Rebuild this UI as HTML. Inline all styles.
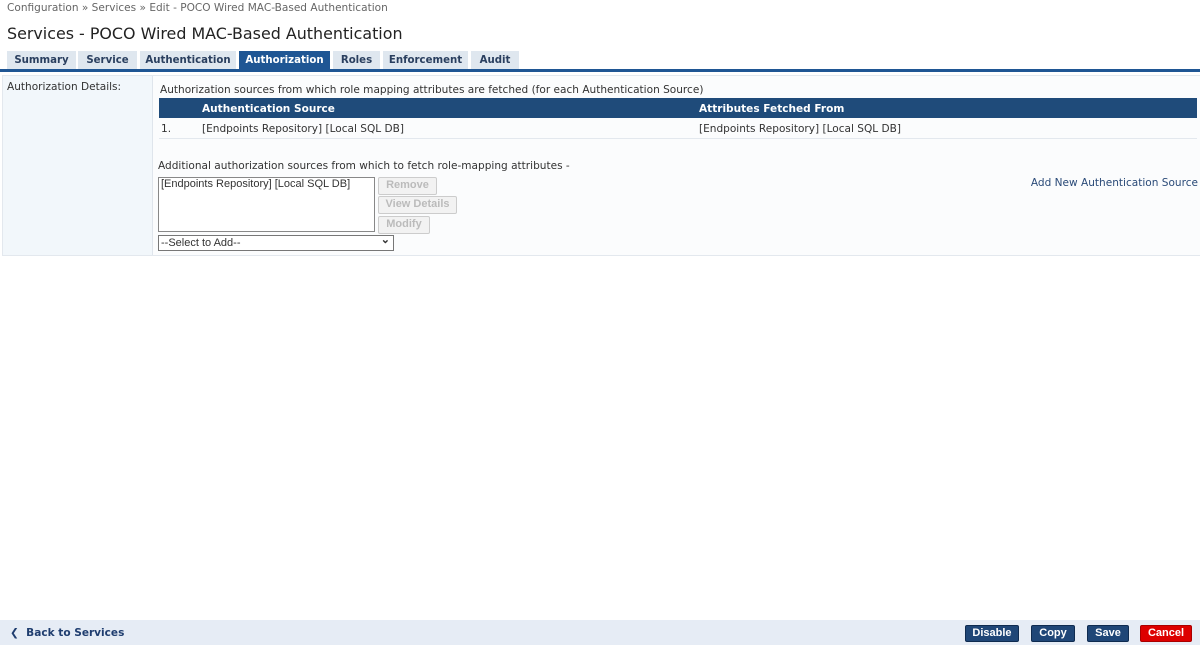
<!DOCTYPE html>
<html><head><style>
body{margin:0;width:1200px;height:648px;background:#fff;font-family:"DejaVu Sans","Liberation Sans",sans-serif;font-size:10.55px;color:#333;position:relative;overflow:hidden}
.a{position:absolute;white-space:nowrap}
.tab{position:absolute;top:51px;height:18px;line-height:19px;background:#dfe7ef;color:#2a3f5f;font-weight:bold;text-align:center;font-size:10.2px}
.tab.on{background:#1f5694;color:#fff}
.btn{position:absolute;height:16px;line-height:15px;border:1px solid #ccc;background:#f2f2f2;color:#bbb;font-family:"Liberation Sans",sans-serif;font-size:11px;font-weight:bold;text-align:center;border-radius:2px}
.fb{position:absolute;top:625px;height:15px;line-height:15px;color:#fff;font-family:"Liberation Sans",sans-serif;font-weight:bold;font-size:11px;text-align:center;background:#1f4677;border:1px solid #0f2b50;border-radius:2px}
</style></head><body>
<div class="a" style="left:7px;top:2px;color:#666">Configuration » Services » Edit - POCO Wired MAC-Based Authentication</div>
<div class="a" style="left:7px;top:24px;font-size:15.9px;color:#222">Services - POCO Wired MAC-Based Authentication</div>
<div class="tab" style="left:7px;width:69px">Summary</div>
<div class="tab" style="left:78px;width:59px">Service</div>
<div class="tab" style="left:140px;width:96px">Authentication</div>
<div class="tab on" style="left:239px;width:91px">Authorization</div>
<div class="tab" style="left:333px;width:47px">Roles</div>
<div class="tab" style="left:383px;width:85px">Enforcement</div>
<div class="tab" style="left:471px;width:48px">Audit</div>
<div class="a" style="left:0;top:69px;width:1200px;height:3px;background:#1f5694"></div>
<div class="a" style="left:2px;top:75px;width:1198px;height:179px;border:1px solid #e3e8ee;border-right:none;background:#fbfcfd"></div>
<div class="a" style="left:3px;top:76px;width:149px;height:179px;background:#f2f7fb;border-right:1px solid #dfe5ec"></div>
<div class="a" style="left:7px;top:81px">Authorization Details:</div>
<div class="a" style="left:160px;top:84px">Authorization sources from which role mapping attributes are fetched (for each Authentication Source)</div>
<div class="a" style="left:159px;top:98px;width:1038px;height:20px;background:#1f4b7a"></div>
<div class="a" style="left:202px;top:103px;color:#fff;font-weight:bold">Authentication Source</div>
<div class="a" style="left:699px;top:103px;color:#fff;font-weight:bold">Attributes Fetched From</div>
<div class="a" style="left:159px;top:118px;width:1038px;height:20px;border-bottom:1px solid #e3e8ee"></div>
<div class="a" style="left:161px;top:123px">1.</div>
<div class="a" style="left:202px;top:123px">[Endpoints Repository] [Local SQL DB]</div>
<div class="a" style="left:699px;top:123px">[Endpoints Repository] [Local SQL DB]</div>
<div class="a" style="left:158px;top:160px">Additional authorization sources from which to fetch role-mapping attributes -</div>
<div class="a" style="left:158px;top:177px;border:1px solid #888;background:#fff;font-family:'Liberation Sans',sans-serif;font-size:11px;padding:0 2px;box-sizing:border-box;width:217px;height:55px">[Endpoints Repository] [Local SQL DB]</div>
<div class="btn" style="left:378px;top:177px;width:57px">Remove</div>
<div class="btn" style="left:378px;top:196px;width:77px">View Details</div>
<div class="btn" style="left:378px;top:216px;width:50px">Modify</div>
<div class="a" style="left:158px;top:235px;width:232px;height:14px;border:1px solid #777;background:#fff;font-family:'Liberation Sans',sans-serif;font-size:11px;line-height:14px;padding-left:2px">--Select to Add--<span style="position:absolute;right:3px;top:-3px;font-size:11px;font-weight:bold">&#x2304;</span></div>
<div class="a" style="right:2px;top:177px;color:#2a4a78">Add New Authentication Source</div>
<div class="a" style="left:0;top:620px;width:1200px;height:25px;background:#e6ecf5"></div>
<div class="a" style="left:10px;top:627px;color:#1f3d6f;font-weight:bold">&#x276E;&nbsp; Back to Services</div>
<div class="fb" style="left:965px;width:52px">Disable</div>
<div class="fb" style="left:1031px;width:42px">Copy</div>
<div class="fb" style="left:1087px;width:40px">Save</div>
<div class="fb" style="left:1140px;width:50px;background:#dd0000;border-color:#a00">Cancel</div>
</body></html>
